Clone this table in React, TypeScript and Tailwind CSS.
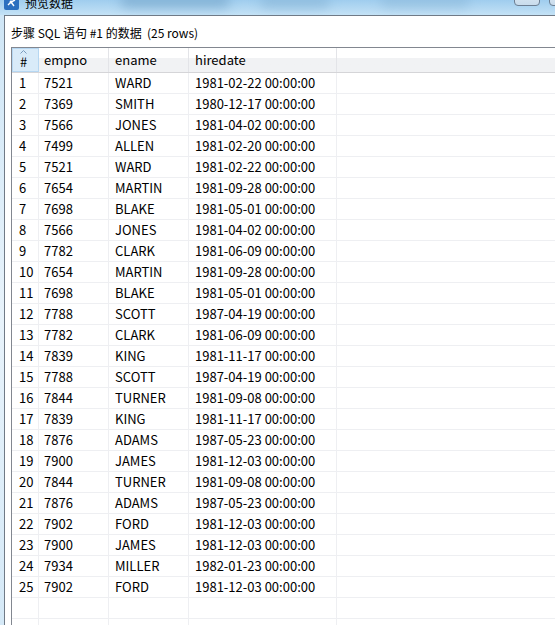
const ROWS: [string, string, string][] = [
  ["7521", "WARD", "1981-02-22 00:00:00"],
  ["7369", "SMITH", "1980-12-17 00:00:00"],
  ["7566", "JONES", "1981-04-02 00:00:00"],
  ["7499", "ALLEN", "1981-02-20 00:00:00"],
  ["7521", "WARD", "1981-02-22 00:00:00"],
  ["7654", "MARTIN", "1981-09-28 00:00:00"],
  ["7698", "BLAKE", "1981-05-01 00:00:00"],
  ["7566", "JONES", "1981-04-02 00:00:00"],
  ["7782", "CLARK", "1981-06-09 00:00:00"],
  ["7654", "MARTIN", "1981-09-28 00:00:00"],
  ["7698", "BLAKE", "1981-05-01 00:00:00"],
  ["7788", "SCOTT", "1987-04-19 00:00:00"],
  ["7782", "CLARK", "1981-06-09 00:00:00"],
  ["7839", "KING", "1981-11-17 00:00:00"],
  ["7788", "SCOTT", "1987-04-19 00:00:00"],
  ["7844", "TURNER", "1981-09-08 00:00:00"],
  ["7839", "KING", "1981-11-17 00:00:00"],
  ["7876", "ADAMS", "1987-05-23 00:00:00"],
  ["7900", "JAMES", "1981-12-03 00:00:00"],
  ["7844", "TURNER", "1981-09-08 00:00:00"],
  ["7876", "ADAMS", "1987-05-23 00:00:00"],
  ["7902", "FORD", "1981-12-03 00:00:00"],
  ["7900", "JAMES", "1981-12-03 00:00:00"],
  ["7934", "MILLER", "1982-01-23 00:00:00"],
  ["7902", "FORD", "1981-12-03 00:00:00"],
];

const FONT = "font-['Noto_Sans_CJK_SC','Liberation_Sans',sans-serif]";

// ─── Window chrome ─────────────────────────────────────────────────────────────

function TitleBar() {
  return (
    <div className="relative h-[15px] overflow-hidden bg-gradient-to-b from-[#9fcdee] to-[#c4e2f6]">
      {/* blurred aero background */}
      <div className="absolute left-[120px] top-[-6px] w-[110px] h-[14px] rounded-full bg-[#6f9fc4] blur-[6px] opacity-60" />
      <div className="absolute left-[260px] top-[-4px] w-[70px] h-[12px] rounded-full bg-[#7aa8cb] blur-[6px] opacity-50" />
      <div className="absolute left-[380px] top-[-6px] w-[90px] h-[14px] rounded-full bg-[#80acce] blur-[6px] opacity-40" />

      <div className="absolute left-[4px] top-[-5px] flex items-center gap-[6px]">
        <div className="w-[15px] h-[15px] rounded-[2px] bg-[#2a6fbf] flex items-center justify-center">
          <svg width="11" height="11" viewBox="0 0 11 11">
            <path d="M2 8 L5 5 L9 3 M5 5 L8 9" stroke="#fff" strokeWidth="1.4" fill="none" />
            <circle cx="5" cy="5" r="1.4" fill="#fff" />
          </svg>
        </div>
        <span className={`${FONT} text-[12px] text-black leading-[15px]`}>预览数据</span>
      </div>

      {/* caption buttons */}
      <div className="absolute right-[-20px] top-[-14px] flex gap-[9px]">
        <div className="w-[26px] h-[20px] rounded-b-[4px] border border-[#6d7f93] bg-gradient-to-b from-[#e4eef7] to-[#c9dcec]" />
        <div className="w-[26px] h-[20px] rounded-b-[4px] border border-[#6d7f93] bg-gradient-to-b from-[#e4eef7] to-[#c9dcec]" />
      </div>
    </div>
  );
}

// ─── Grid ──────────────────────────────────────────────────────────────────────

function HeaderCell({ children, className = "" }: { children?: React.ReactNode; className?: string }) {
  return (
    <div
      className={`h-full flex items-center border-r border-[#e3e4e8] bg-gradient-to-b from-white from-40% to-[#f1f2f4] to-40% ${className}`}
    >
      {children}
    </div>
  );
}

function DataGrid() {
  return (
    <div className={`ml-[5px] border-l border-t border-[#828790] ${FONT} text-[13px] text-black`}>
      {/* header */}
      <div className="flex h-[25px] border-b border-[#d5d5d8]">
        <div className="relative w-[27px] h-full flex items-center pl-[7px] bg-[#d9ebf9] border border-[#b6d7f2]">
          <svg className="absolute left-[7px] top-[1px]" width="7" height="4" viewBox="0 0 7 4">
            <path d="M0.5 3.5 L3.5 0.5 L6.5 3.5" stroke="#7a9bbd" fill="none" />
          </svg>
          <span className="mt-[3px]">#</span>
        </div>
        <HeaderCell className="w-[70px] pl-[5px]">empno</HeaderCell>
        <HeaderCell className="w-[80px] pl-[6px]">ename</HeaderCell>
        <HeaderCell className="w-[148px] pl-[6px]">hiredate</HeaderCell>
        <HeaderCell className="flex-1" />
      </div>

      {/* rows */}
      {ROWS.map(([empno, ename, hiredate], i) => (
        <div key={i} className="flex h-[21px] border-b border-[#eeeff2]">
          <div className="w-[27px] flex items-center pl-[7px] border-r border-[#eeeff2]">{i + 1}</div>
          <div className="w-[70px] flex items-center pl-[5px] border-r border-[#eeeff2]">{empno}</div>
          <div className="w-[80px] flex items-center pl-[6px] border-r border-[#eeeff2]">{ename}</div>
          <div className="w-[148px] flex items-center pl-[6px] border-r border-[#eeeff2]">{hiredate}</div>
          <div className="flex-1" />
        </div>
      ))}

      {/* empty trailing rows */}
      {[0, 1].map((i) => (
        <div key={`e${i}`} className="flex h-[21px] border-b border-[#eeeff2]">
          <div className="w-[27px] border-r border-[#eeeff2]" />
          <div className="w-[70px] border-r border-[#eeeff2]" />
          <div className="w-[80px] border-r border-[#eeeff2]" />
          <div className="w-[148px] border-r border-[#eeeff2]" />
          <div className="flex-1" />
        </div>
      ))}
    </div>
  );
}

// ─── Page ──────────────────────────────────────────────────────────────────────

export default function App() {
  return (
    <div className="w-[555px] h-[625px] overflow-hidden bg-[#c4e2f6] flex flex-col">
      <TitleBar />

      <div className="flex flex-1 min-h-0">
        {/* left aero border */}
        <div className="w-[4px] bg-gradient-to-b from-[#cfe6f6] via-[#e8f3fb] to-[#d5e9f7]" />

        {/* window client area */}
        <div className="flex-1 min-w-0 bg-white border-l border-t border-[#707a86] pl-[1px] overflow-hidden">
          <div className={`${FONT} text-[12px] text-black h-[31px] pl-[5px] pt-[9px] leading-[16px] whitespace-pre`}>
            步骤 SQL 语句 #1 的数据  (25 rows)
          </div>
          <div className="w-[600px]">
            <DataGrid />
          </div>
        </div>
      </div>
    </div>
  );
}
